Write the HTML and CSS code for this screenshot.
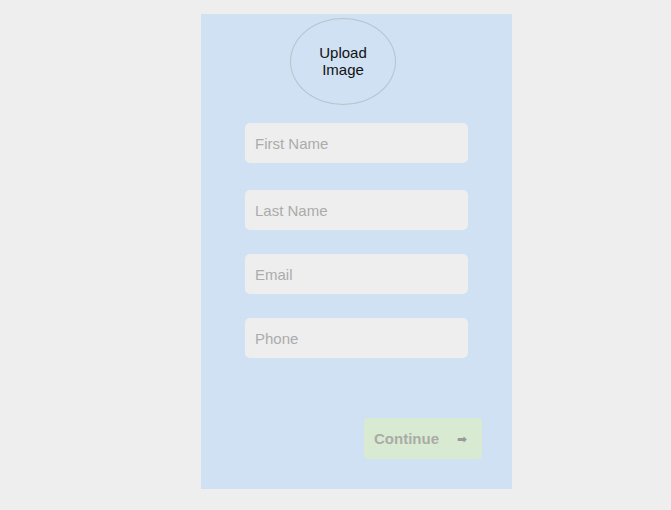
FILE: index.html
```html
<!DOCTYPE html>
<html>
<head>
<meta charset="utf-8">
<link rel="stylesheet" href="styles.css">
</head>
<body>
<div class="panel">
  <div class="avatar">Upload<br>Image</div>
  <div class="field f1"><input type="text" placeholder="First Name"></div>
  <div class="field f2"><input type="text" placeholder="Last Name"></div>
  <div class="field f3"><input type="text" placeholder="Email"></div>
  <div class="field f4"><input type="text" placeholder="Phone"></div>
  <div class="actions">
    <button class="continue"><span>Continue</span><span class="arrow">&#10145;</span></button>
  </div>
</div>
</body>
</html>
```
FILE: styles.css
```css
html, body {
  margin: 0;
  padding: 0;
  background: #efeeee;
  font-family: "Liberation Sans", Arial, sans-serif;
}
.panel {
  margin: 14px 0 0 201px;
  width: 311px;
  height: 475px;
  background: #cfe1f3;
  display: flex;
  flex-direction: column;
  box-sizing: border-box;
  padding-top: 4px;
}
.avatar {
  margin-left: 89px;
  width: 104px;
  height: 84px;
  border: 1px solid #b9c3cc;
  border-radius: 50%;
  display: flex;
  align-items: center;
  justify-content: center;
  text-align: center;
  font-size: 15px;
  line-height: 17px;
  color: #111;
  padding-bottom: 1px;
  box-sizing: content-box;
}
.field {
  margin-left: 44px;
  width: 223px;
}
.f1 { margin-top: 18px; }
.f2 { margin-top: 27px; }
.f3, .f4 { margin-top: 24px; }
.field input {
  display: block;
  width: 100%;
  height: 40px;
  box-sizing: border-box;
  border: none;
  border-radius: 5px;
  background: #eeeeee;
  padding: 0 10px;
  font-family: "Liberation Sans", Arial, sans-serif;
  font-size: 15px;
  color: #333;
  outline: none;
}
.field input::placeholder { color: #ababab; }
.actions {
  margin-top: 60px;
  display: flex;
  justify-content: flex-end;
  padding-right: 30px;
}
.continue {
  width: 118px;
  height: 41px;
  border: none;
  border-radius: 4px;
  background: #d9ead3;
  color: #a8aca6;
  font-family: "Liberation Sans", Arial, sans-serif;
  font-weight: bold;
  font-size: 15px;
  display: flex;
  align-items: center;
  justify-content: space-between;
  padding: 0 15px 0 10px;
}
.arrow {
  font-size: 12px;
  font-family: "DejaVu Sans", sans-serif;
  color: #9a9a9a;
}
```
